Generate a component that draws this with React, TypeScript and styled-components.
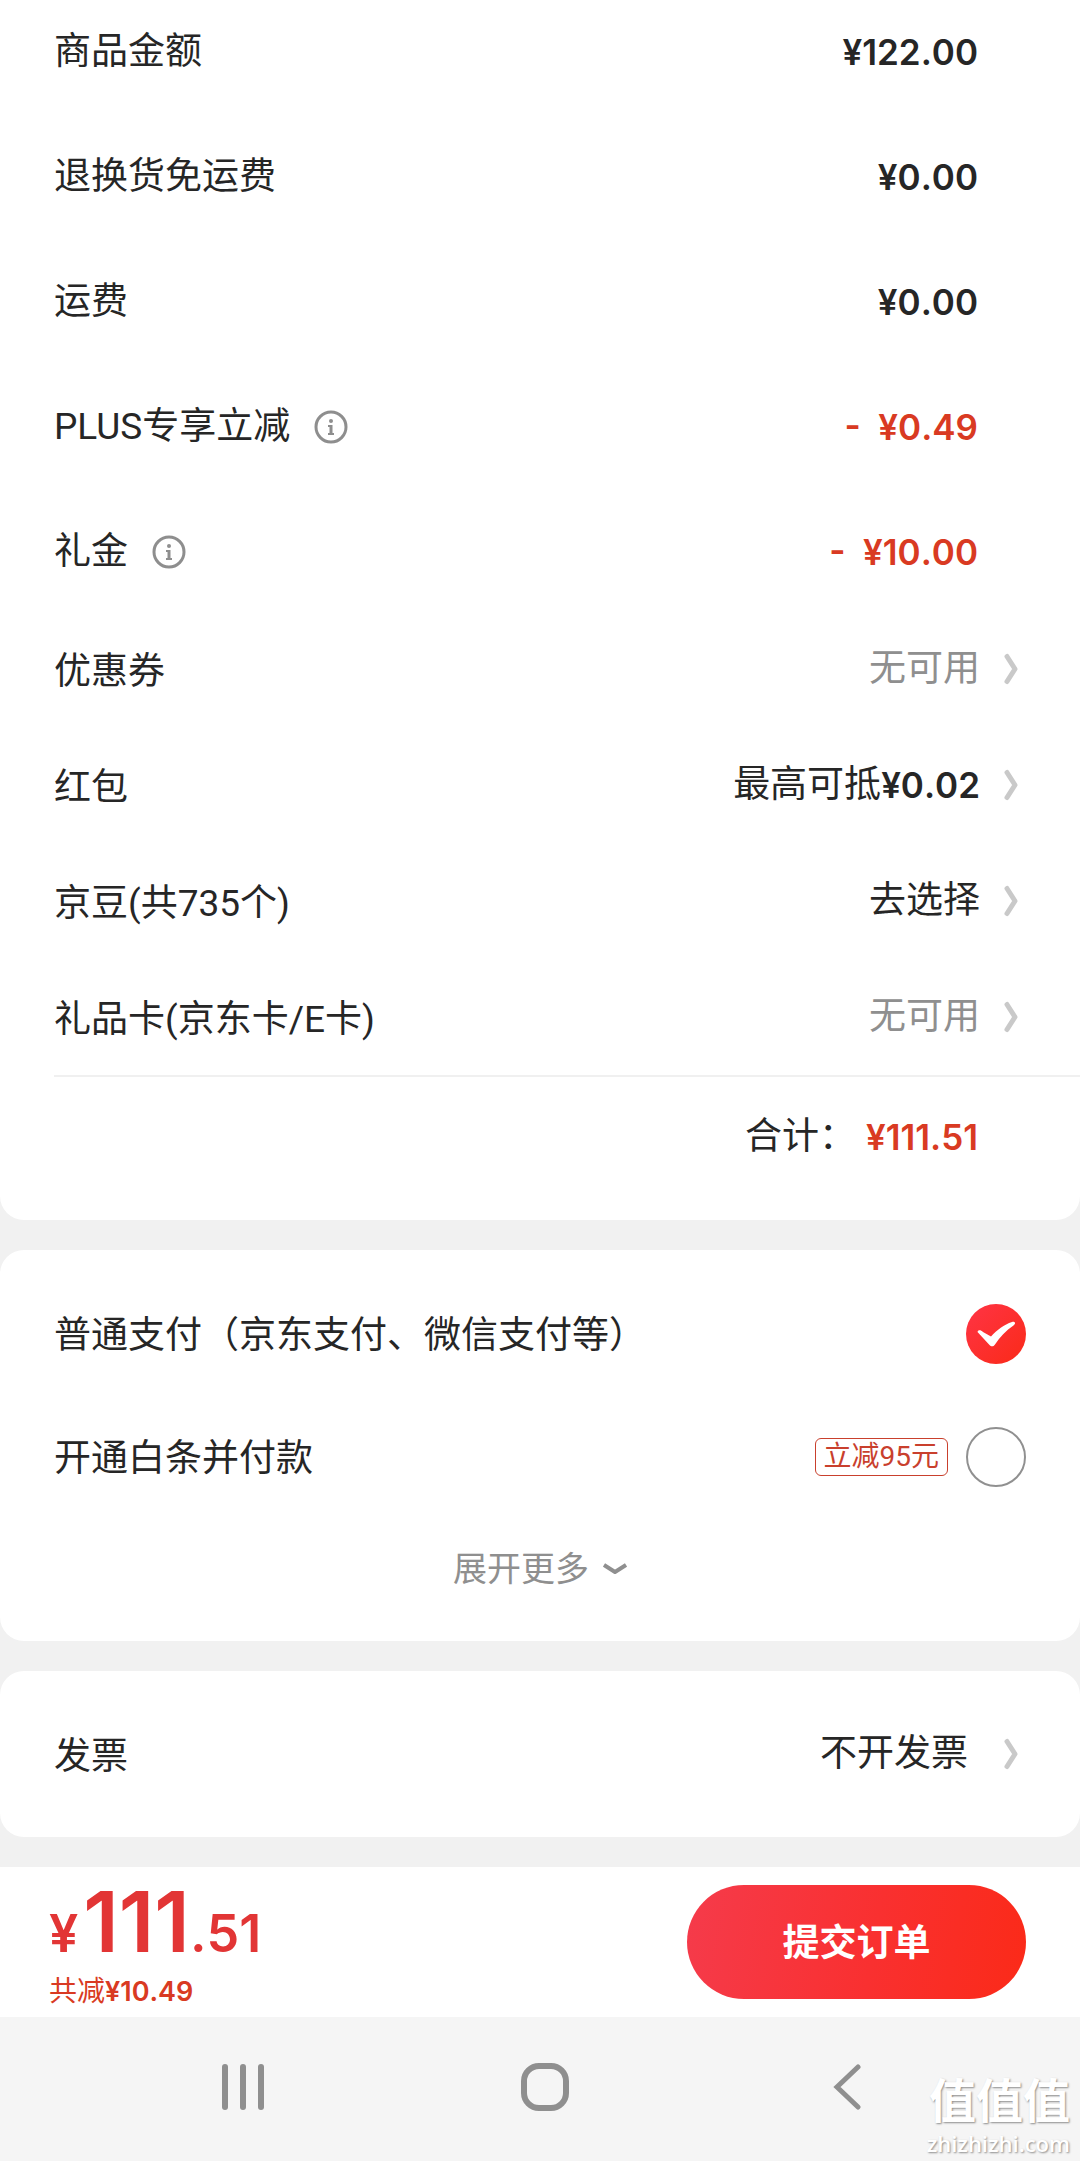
import React, { useState } from 'react';
import styled, { createGlobalStyle, css } from 'styled-components';

const GlobalStyle = createGlobalStyle`
  * { box-sizing: border-box; }
  body {
    margin: 0;
    background: #f1f1f1;
    color: #262626;
    font-family: Roboto, 'Noto Sans CJK SC', sans-serif;
    font-size: 37px;
    line-height: 48px;
  }
  button {
    border: 0;
    padding: 0;
    background: none;
    color: inherit;
    font: inherit;
    cursor: pointer;
  }
`;

const Page = styled.div`
  display: flex;
  flex-direction: column;
  min-height: 100vh;
`;

const Cards = styled.main`
  display: flex;
  flex-direction: column;
  flex: 1;
  gap: 30px;
  padding-bottom: 30px;
`;

const Card = styled.section<{ $first?: boolean }>`
  background: #fff;
  border-radius: ${(p) => (p.$first ? '0 0 24px 24px' : '24px')};
`;

const FeeList = styled.dl`
  display: flex;
  flex-direction: column;
  gap: 77px;
  margin: 0;
  padding: 28px 102px 35px 54px;
`;

const FeeRow = styled.div`
  display: flex;
  justify-content: space-between;
  align-items: center;
`;

const FeeName = styled.dt`
  display: flex;
  align-items: center;
  gap: 24px;
`;

const FeeValue = styled.dd`
  display: flex;
  margin: 0;
`;

const InfoButton = styled.button`
  display: flex;
`;

const Amount = styled.span<{ $red?: boolean; $small?: boolean }>`
  font-family: Inter, 'Noto Sans CJK SC', sans-serif;
  font-size: ${(p) => (p.$small ? 27 : 35)}px;
  font-weight: 600;
  font-kerning: none;
  white-space: pre;
  ${(p) => p.$red && css`color: #d93a22;`}
`;

const LinkRow = styled.button<{ $tall?: boolean }>`
  display: flex;
  align-items: center;
  width: 100%;
  height: ${(p) => (p.$tall ? 166 : 116)}px;
  padding: 0 62px 0 54px;
  gap: ${(p) => (p.$tall ? 36 : 24)}px;
  text-align: left;
`;

const LinkName = styled.span`
  flex: 1;
  padding-top: 5px;
`;

const LinkValue = styled.span<{ $muted?: boolean }>`
  display: flex;
  align-items: center;
  ${(p) => p.$muted && css`color: #8f8f8f;`}
`;

const Total = styled.div`
  display: flex;
  justify-content: flex-end;
  align-items: center;
  gap: 10px;
  margin-left: 54px;
  padding: 36px 102px 59px 0;
  border-top: 2px solid #f0f0f0;
`;

const Payments = styled.div`
  display: flex;
  flex-direction: column;
  padding: 22px 0 21px;
`;

const PayRow = styled.label`
  display: flex;
  align-items: center;
  height: 123px;
  padding: 0 54px;
  gap: 18px;
  cursor: pointer;
`;

const PayName = styled.span`
  flex: 1;
  padding-top: 5px;
`;

const Tag = styled.span`
  padding: 0 8px;
  border: 1px solid #c9402d;
  border-radius: 6px;
  color: #c9402d;
  font-size: 28px;
  line-height: 36px;
`;

const RadioBox = styled.span`
  display: grid;
  width: 60px;
  height: 60px;
  > * { grid-area: 1 / 1; }
`;

const Radio = styled.input`
  appearance: none;
  width: 60px;
  height: 60px;
  margin: 0;
  border: 2px solid #909090;
  border-radius: 50%;
  &:checked {
    border: 0;
    background: linear-gradient(135deg, #ff3445, #fa2a18);
  }
  & + svg { visibility: hidden; pointer-events: none; }
  &:checked + svg { visibility: visible; }
`;

const ExpandButton = styled.button`
  display: flex;
  align-items: center;
  justify-content: center;
  gap: 14px;
  height: 102px;
  color: #8f8f8f;
  font-size: 34px;
`;

const Checkout = styled.footer`
  display: flex;
  justify-content: space-between;
  align-items: center;
  height: 150px;
  padding: 0 54px 0 49px;
  background: #fff;
`;

const Sum = styled.div`
  display: flex;
  flex-direction: column;
  padding-top: 4px;
  color: #e23535;
`;

const SumPrice = styled.div`
  font-family: Inter, sans-serif;
  font-size: 52px;
  font-weight: 600;
  font-kerning: none;
  line-height: 84px;
`;

const SumWhole = styled.span`
  margin-left: 5px;
  font-size: 84px;
`;

const Saved = styled.div`
  display: flex;
  color: #d93a22;
  font-size: 28px;
  line-height: 32px;
`;

const SubmitButton = styled.button`
  width: 339px;
  height: 114px;
  padding-top: 3px;
  border-radius: 57px;
  background: linear-gradient(100deg, #f53b4b, #f93030 55%, #fb2a18);
  color: #fff;
  font-weight: 700;
`;

const SystemNav = styled.nav`
  position: relative;
  display: grid;
  grid-template-columns: repeat(3, 1fr);
  height: 144px;
  padding: 0 82px 4px 92px;
  background: #f5f5f5;
`;

const NavButton = styled.button`
  display: flex;
  align-items: center;
  justify-content: center;
`;

const Watermark = styled.div`
  position: absolute;
  right: 10px;
  bottom: 5px;
  display: flex;
  flex-direction: column;
  align-items: flex-end;
  color: #fff;
  text-shadow: 1px 1px 2px #8c8c8c;
  pointer-events: none;
`;

const WatermarkName = styled.span`
  font-size: 47px;
  font-weight: 700;
  line-height: 56px;
`;

const WatermarkSite = styled.span`
  font-family: 'Open Sans', sans-serif;
  font-size: 22px;
  font-weight: 600;
  line-height: 26px;
`;

const InfoIcon = () => (
  <svg width="34" height="34" viewBox="0 0 34 34" fill="none" aria-hidden="true">
    <circle cx="17" cy="17" r="15" stroke="#8e8e8e" strokeWidth="3" />
    <circle cx="17" cy="11" r="2" fill="#8e8e8e" />
    <path d="M14 15H18.500V23H20V25H14V23H15.500V17H14Z" fill="#8e8e8e" />
  </svg>
);

const Chevron = () => (
  <svg width="14" height="32" viewBox="0 0 14 32" fill="none" aria-hidden="true">
    <path d="M3 3.500L11 16L3 28.500" stroke="#c9c9c9" strokeWidth="5" strokeLinecap="round" strokeLinejoin="round" />
  </svg>
);

const CheckMark = () => (
  <svg width="60" height="60" viewBox="0 0 60 60" aria-hidden="true">
    <path
      d="M11.500 28C12 25.500 15 26 17 28L25 32.500C31 26 38 20.500 46 18C49.500 17.200 50 20 47.500 21.500C40 26.500 33.500 33.500 29 40.500C27.500 42.800 25 43 23.500 41Z"
      fill="#fff"
    />
  </svg>
);

const fees = [
  { name: '商品金额', value: '¥122.00' },
  { name: '退换货免运费', value: '¥0.00' },
  { name: '运费', value: '¥0.00' },
  { name: 'PLUS专享立减', value: '-  ¥0.49', info: true, red: true },
  { name: '礼金', value: '-  ¥10.00', info: true, red: true },
];

const discounts = [
  { name: '优惠券', value: '无可用', muted: true },
  { name: '红包', value: '最高可抵', amount: '¥0.02' },
  { name: '京豆(共735个)', value: '去选择' },
  { name: '礼品卡(京东卡/E卡)', value: '无可用', muted: true },
];

const payments = [
  { id: 'normal', name: '普通支付（京东支付、微信支付等）' },
  { id: 'baitiao', name: '开通白条并付款', tag: '立减95元' },
];

export default function App() {
  const [payment, setPayment] = useState('normal');

  return (
    <Page>
      <GlobalStyle />
      <Cards>
        <Card $first>
          <FeeList>
            {fees.map((fee) => (
              <FeeRow key={fee.name}>
                <FeeName>
                  {fee.name}
                  {fee.info && (
                    <InfoButton type="button" aria-label={`${fee.name}说明`}>
                      <InfoIcon />
                    </InfoButton>
                  )}
                </FeeName>
                <FeeValue>
                  <Amount $red={fee.red}>{fee.value}</Amount>
                </FeeValue>
              </FeeRow>
            ))}
          </FeeList>
          {discounts.map((item) => (
            <LinkRow key={item.name} type="button">
              <LinkName>{item.name}</LinkName>
              <LinkValue $muted={item.muted}>
                {item.value}
                {item.amount && <Amount>{item.amount}</Amount>}
              </LinkValue>
              <Chevron />
            </LinkRow>
          ))}
          <Total>
            合计：<Amount $red>¥111.51</Amount>
          </Total>
        </Card>

        <Card>
          <Payments>
            {payments.map((item) => (
              <PayRow key={item.id}>
                <PayName>{item.name}</PayName>
                {item.tag && <Tag>{item.tag}</Tag>}
                <RadioBox>
                  <Radio
                    type="radio"
                    name="payment"
                    value={item.id}
                    checked={payment === item.id}
                    onChange={() => setPayment(item.id)}
                  />
                  <CheckMark />
                </RadioBox>
              </PayRow>
            ))}
            <ExpandButton type="button">
              展开更多
              <svg width="24" height="12" viewBox="0 0 24 12" fill="none" aria-hidden="true">
                <path d="M1 2L12 9L23 2" stroke="#8f8f8f" strokeWidth="4" strokeLinejoin="round" />
              </svg>
            </ExpandButton>
          </Payments>
        </Card>

        <Card>
          <LinkRow type="button" $tall>
            <LinkName>发票</LinkName>
            <LinkValue>不开发票</LinkValue>
            <Chevron />
          </LinkRow>
        </Card>
      </Cards>

      <Checkout>
        <Sum>
          <SumPrice>
            ¥<SumWhole>111</SumWhole>.51
          </SumPrice>
          <Saved>
            共减<Amount $red $small>¥10.49</Amount>
          </Saved>
        </Sum>
        <SubmitButton type="button">提交订单</SubmitButton>
      </Checkout>

      <SystemNav>
        <NavButton type="button" aria-label="最近任务">
          <svg width="42" height="46" viewBox="0 0 42 46" fill="#8f8f8f" aria-hidden="true">
            <rect x="0" y="0" width="6" height="46" rx="3" />
            <rect x="18" y="0" width="6" height="46" rx="3" />
            <rect x="36" y="0" width="6" height="46" rx="3" />
          </svg>
        </NavButton>
        <NavButton type="button" aria-label="主屏幕">
          <svg width="48" height="48" viewBox="0 0 48 48" fill="none" aria-hidden="true">
            <rect x="3" y="3" width="42" height="42" rx="15" stroke="#8f8f8f" strokeWidth="6" />
          </svg>
        </NavButton>
        <NavButton type="button" aria-label="返回">
          <svg width="28" height="46" viewBox="0 0 28 46" fill="none" aria-hidden="true">
            <path d="M25 3L4 23L25 43" stroke="#8f8f8f" strokeWidth="5" strokeLinecap="round" strokeLinejoin="miter" />
          </svg>
        </NavButton>
        <Watermark>
          <WatermarkName>值值值</WatermarkName>
          <WatermarkSite>zhizhizhi.com</WatermarkSite>
        </Watermark>
      </SystemNav>
    </Page>
  );
}
